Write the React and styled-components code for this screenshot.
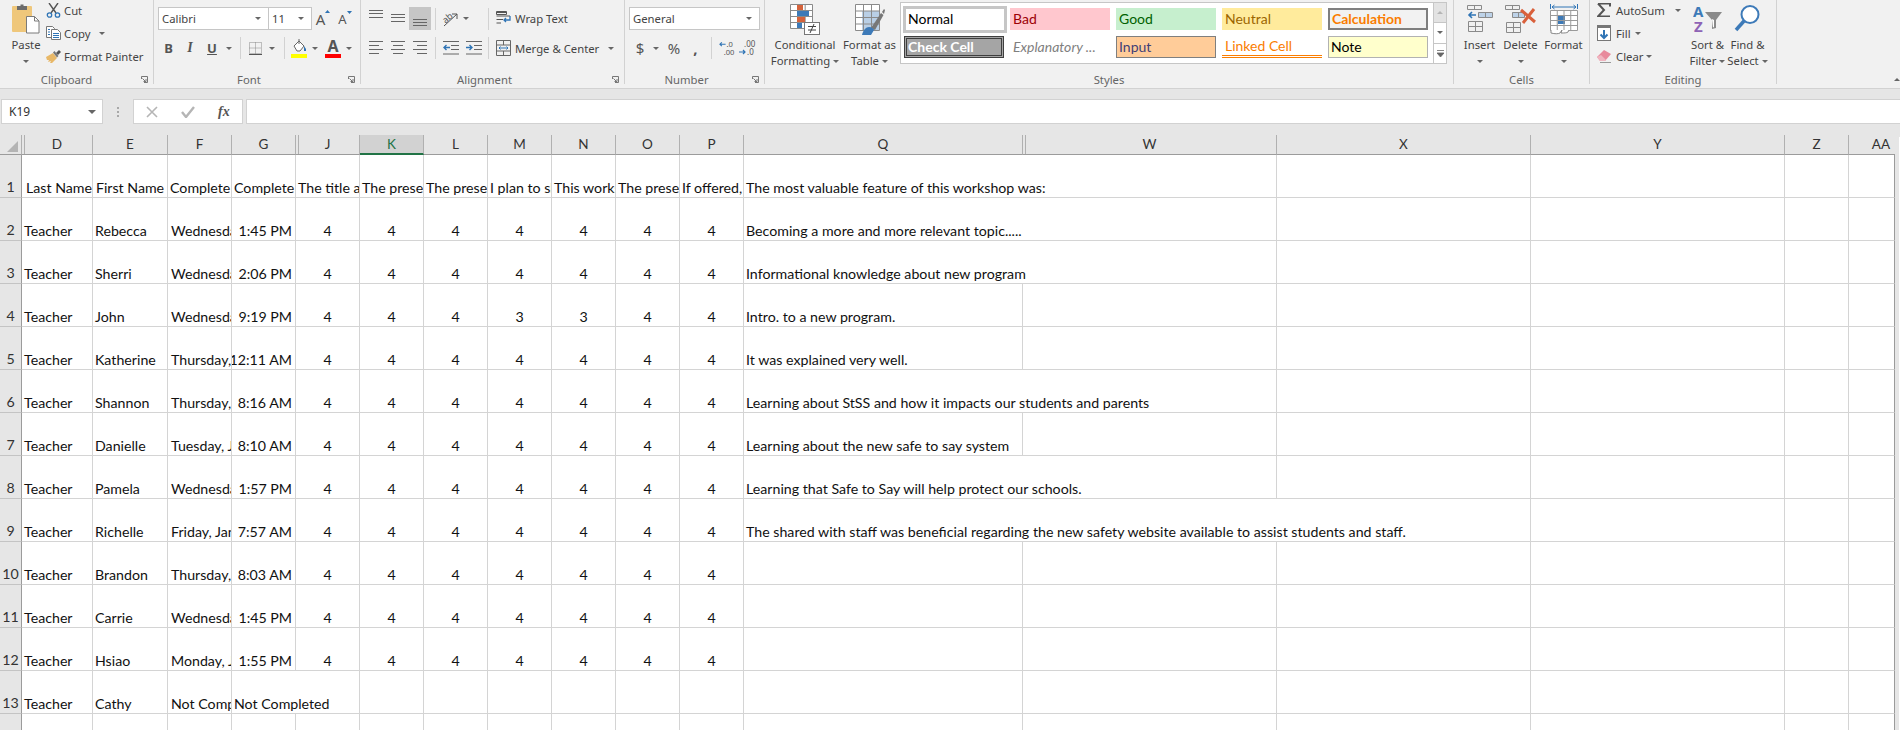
import styled, { createGlobalStyle } from 'styled-components';

const UI_FONT = '"Noto Sans", "Open Sans", sans-serif';
const CELL_FONT = 'Lato, "Liberation Sans", sans-serif';

const GlobalStyle = createGlobalStyle`
  html, body {
    margin: 0;
    height: 730px;
    overflow: hidden;
    background: #e6e6e6;
  }
  * { box-sizing: border-box; }
`;

const Ribbon = styled.div`
  display: flex;
  height: 89px;
  padding-bottom: 5px;
  background: #f1f1f1;
  border-bottom: 1px solid #d2d2d2;
  font-family: ${UI_FONT};
  font-size: 11.3px;
  color: #444;
`;

const Group = styled.div`
  position: relative;
  display: flex;
  flex-direction: column;
  flex: none;
  width: ${({ $w }) => $w}px;
  height: 84px;
  border-right: 1px solid #d2d2d2;
`;

const GroupBody = styled.div`
  display: flex;
  flex: none;
  height: 73px;
  padding-left: ${({ $pad }) => $pad || 0}px;
`;

const GroupLabel = styled.div`
  flex: none;
  height: 14px;
  margin-top: 0;
  padding-right: ${({ $inset }) => $inset || 0}px;
  line-height: 14px;
  text-align: center;
  color: #666;
  font-size: 11.3px;
`;

const Launcher = styled.svg`
  position: absolute;
  right: 5px;
  bottom: 1px;
  width: 7px;
  height: 7px;
`;

const Caret = styled.i`
  display: inline-block;
  flex: none;
  width: 0;
  height: 0;
  border-left: 3px solid transparent;
  border-right: 3px solid transparent;
  border-top: 3px solid #666;
  margin-left: ${({ $ml }) => $ml || 0}px;
`;

const LargeButton = styled.div`
  display: flex;
  flex-direction: column;
  align-items: center;
  flex: none;
  width: ${({ $w }) => $w}px;
  line-height: 16px;
  white-space: nowrap;
`;

const LargeIcon = styled.div`
  display: flex;
  justify-content: center;
  height: 37px;
  padding-top: ${({ $top }) => ($top === undefined ? 4 : $top)}px;
`;

const CaretLine = styled.div`
  display: flex;
  align-items: center;
  height: 16px;
`;

const SmallStack = styled.div`
  display: flex;
  flex-direction: column;
  gap: 1px;
  flex: none;
  width: ${({ $w }) => $w}px;
  margin-top: -1px;
`;

const SmallRow = styled.div`
  display: flex;
  align-items: center;
  height: 22px;
  white-space: nowrap;
`;

const SmallIcon = styled.div`
  display: flex;
  align-items: center;
  flex: none;
  width: ${({ $w }) => $w}px;
`;

const TwoRows = styled.div`
  display: flex;
  flex-direction: column;
  gap: 7px;
  padding-top: 7px;
`;

const ToolRow = styled.div`
  display: flex;
  align-items: center;
  height: ${({ $h }) => $h}px;
  white-space: nowrap;
`;

const Slot = styled.div`
  display: flex;
  align-items: center;
  justify-content: center;
  flex: none;
  width: ${({ $w }) => $w}px;
  height: ${({ $h }) => ($h ? `${$h}px` : 'auto')};
  background: ${({ $active }) => ($active ? '#c6c6c6' : 'transparent')};
`;

const Divider = styled.div`
  flex: none;
  width: ${({ $w }) => $w || 8}px;
  height: 22px;
  display: flex;
  justify-content: center;

  &::after {
    content: '';
    width: 1px;
    background: #d2d2d2;
  }
`;

const ComboBox = styled.div`
  display: flex;
  align-items: center;
  justify-content: space-between;
  flex: none;
  width: ${({ $w }) => $w}px;
  height: 23px;
  margin-left: ${({ $ml }) => $ml || 0}px;
  padding: 0 7px 0 3px;
  background: #fff;
  border: 1px solid #c6c6c6;
  color: #444;
`;

const Glyph = styled.span`
  font-family: ${({ $serif }) => ($serif ? '"Liberation Serif", serif' : UI_FONT)};
  font-size: ${({ $size }) => $size || 13}px;
  font-weight: ${({ $bold }) => ($bold ? 700 : 400)};
  font-style: ${({ $italic }) => ($italic ? 'italic' : 'normal')};
  text-decoration: ${({ $under }) => ($under ? 'underline' : 'none')};
  color: #555;
`;

const Gallery = styled.div`
  display: flex;
  flex: none;
  width: 547px;
  height: 62px;
  margin: 2px 0 0 1px;
  background: #fff;
  border: 1px solid #c6c6c6;
`;

const StyleGrid = styled.div`
  display: grid;
  flex: none;
  grid-template-columns: repeat(5, 100px);
  grid-auto-rows: 22px;
  gap: 6px;
  width: 532px;
  padding: 5px 0 0 3px;
  font-family: ${CELL_FONT};
  font-size: 14px;
`;

const StyleCell = styled.div`
  display: flex;
  align-items: center;
  padding-left: 3px;
  padding-bottom: 1px;
  white-space: nowrap;
  overflow: hidden;
  ${({ $kind }) => STYLE_KINDS[$kind]}
`;

const STYLE_KINDS = {
  normal: 'background:#fff;color:#000;margin:-2px -3px -3px -1px;padding:0 0 3px 2px;border:3px solid #c6c6c6;',
  bad: 'background:#ffc7ce;color:#9c0006;',
  good: 'background:#c6efce;color:#006100;',
  neutral: 'background:#ffeb9c;color:#9c6500;',
  calculation: 'background:#f2f2f2;color:#fa7d00;font-weight:700;border:2px solid #7f7f7f;padding:0 0 2px 2px;',
  check: 'background:#a5a5a5;color:#fff;font-weight:700;border:3px double #3f3f3f;padding-left:1px;',
  explanatory: 'color:#7f7f7f;font-style:italic;',
  input: 'background:#ffcc99;color:#3f3f76;border:1px solid #7f7f7f;padding-left:2px;',
  linked: 'color:#fa7d00;border-bottom:3px double #fa7d00;',
  note: 'background:#ffffcc;color:#000;border:1px solid #b2b2b2;padding-left:2px;',
};

const GalleryScroll = styled.div`
  display: flex;
  flex-direction: column;
  flex: none;
  width: 13px;
`;

const ScrollButton = styled.div`
  display: flex;
  align-items: center;
  justify-content: center;
  flex: 1;
  background: ${({ $off }) => ($off ? '#e3e3e3' : '#fff')};
  border-left: 1px solid #c6c6c6;
  border-bottom: ${({ $last }) => ($last ? 'none' : '1px solid #c6c6c6')};
`;

const Collapse = styled.div`
  display: flex;
  flex: 1;
  align-items: flex-end;
  justify-content: flex-end;
  padding-bottom: 2px;
`;

const FormulaStrip = styled.div`
  display: flex;
  height: 46px;
  padding: 10px 0 11px 1px;
  background: #e6e6e6;
  font-family: ${UI_FONT};
`;

const NameBox = styled.div`
  display: flex;
  align-items: center;
  justify-content: space-between;
  flex: none;
  width: 102px;
  padding: 0 6px 0 7px;
  background: #fff;
  border: 1px solid #d2d2d2;
  font-size: 12px;
  color: #333;
`;

const Grip = styled.div`
  display: flex;
  flex-direction: column;
  align-items: center;
  justify-content: center;
  gap: 2px;
  flex: none;
  width: 30px;

  i {
    width: 2px;
    height: 2px;
    background: #a8a8a8;
  }
`;

const FxBox = styled.div`
  display: flex;
  align-items: center;
  flex: none;
  width: 110px;
  padding-left: 12px;
  gap: 23px;
  background: #fff;
  border: 1px solid #d2d2d2;
`;

const FormulaInput = styled.div`
  flex: 1;
  margin-left: 3px;
  background: #fff;
  border: 1px solid #d2d2d2;
  border-right: none;
`;

const SheetWrap = styled.div`
  display: flex;
`;

const SheetArea = styled.div`
  display: grid;
  flex: none;
  grid-template-columns: 22px 71px 75px repeat(9, 64px) 279px 254px 254px 254px 64px 46px;
  grid-template-rows: 20px repeat(14, 43px);
  font-family: ${CELL_FONT};
  font-size: 14.2px;
  color: #111;
  background: #fff;
`;

const ScrollEdge = styled.div`
  flex: none;
  width: 1px;
  height: 593px;
  margin: 2px 0 0 4px;
  background: #fff;
`;

const HeadCell = styled.div`
  display: flex;
  align-items: center;
  justify-content: center;
  padding: 0 0 1px ${({ $pl }) => $pl || 0}px;
  font-size: 13.5px;
  overflow: hidden;
  background-color: ${({ $sel }) => ($sel ? '#d2d2d2' : '#e6e6e6')};
  background-image: ${({ $double }) =>
    $double ? 'linear-gradient(#b0b0b0, #b0b0b0)' : 'none'};
  background-size: 1px 100%;
  background-position: 2px 0;
  background-repeat: no-repeat;
  color: ${({ $sel }) => ($sel ? '#217346' : '#333')};
  border-right: ${({ $clip }) => ($clip ? 'none' : '1px solid #b0b0b0')};
  border-bottom: ${({ $sel }) => ($sel ? '2px solid #217346' : '1px solid #9b9b9b')};
`;

const Corner = styled(HeadCell)`
  justify-content: flex-end;
  align-items: flex-end;
  padding: 0 3px 2px 0;
`;

const RowHead = styled.div`
  display: flex;
  align-items: flex-end;
  justify-content: center;
  padding-bottom: 2px;
  background: #e6e6e6;
  color: #333;
  border-right: 1px solid #9b9b9b;
  border-bottom: 1px solid #c4c4c4;
`;

const Cell = styled.div`
  display: flex;
  align-items: flex-end;
  justify-content: ${({ $align }) => $align || 'flex-start'};
  padding: 0 ${({ $pr }) => ($pr === undefined ? 2 : $pr)}px 1px ${({ $pl }) => ($pl === undefined ? 2 : $pl)}px;
  white-space: nowrap;
  overflow: ${({ $spill }) => ($spill ? 'visible' : 'hidden')};
  border-bottom: 1px solid #d4d4d4;
  border-right: ${({ $open, $edge }) =>
    $open ? 'none' : $edge ? '1px solid #9b9b9b' : '1px solid #d4d4d4'};
`;

const Line = ({ d, c = '#666', w = 1 }) => <path d={d} stroke={c} strokeWidth={w} fill="none" />;

const PasteIcon = () => (
  <svg width="30" height="31" viewBox="0 0 30 31">
    <rect x="1" y="3" width="20" height="26" rx="1" fill="#efc77b" />
    <path d="M6 7V3h3.5V1.5h3V3H16v4z" fill="#6b6b6b" />
    <path d="M15.5 15.5h8l4.5 4.5v12h-12.5z" fill="#fff" stroke="#7a7a7a" transform="translate(0 -2)" />
    <path d="M23.5 13.5V18h4.5" fill="none" stroke="#7a7a7a" />
  </svg>
);

const CutIcon = () => (
  <svg width="15" height="15" viewBox="0 0 15 15">
    <Line d="M3 0l7 10M12 0L5 10" c="#555" w={1.4} />
    <circle cx="3.5" cy="12" r="2.2" fill="none" stroke="#2f74b5" strokeWidth="1.3" />
    <circle cx="11.5" cy="12" r="2.2" fill="none" stroke="#2f74b5" strokeWidth="1.3" />
  </svg>
);

const CopyIcon = () => (
  <svg width="15" height="14" viewBox="0 0 15 14">
    <path d="M.5.5h6l2 2v9h-8z" fill="#fff" stroke="#777" />
    <path d="M5.5 3.5h6l3 3v7h-9z" fill="#fff" stroke="#777" />
    <Line d="M2 3.5h2M2 6h2M2 8.5h2M7 7.5h6M7 9.5h6M7 11.5h6" c="#2f74b5" />
  </svg>
);

const PainterIcon = () => (
  <svg width="16" height="14" viewBox="0 0 16 14">
    <path d="M0 8l7-4 4 5-5 5H4l1-2-3 1 1-2-2 0z" fill="#e8b868" />
    <path d="M7 3.5l4 5 1.5-1.5-4-5z" fill="#777" />
    <path d="M10 4l3-3 2 2-3 3z" fill="#555" />
  </svg>
);

const GrowIcon = ({ down }) => (
  <Slot $w={22}>
    <Glyph $size={down ? 13 : 15}>A</Glyph>
    <svg width="5" height="12" viewBox="0 0 5 12" style={{ alignSelf: 'flex-start' }}>
      <path d={down ? 'M0 1h5L2.5 4z' : 'M0 4h5L2.5 1z'} fill="#2f74b5" />
    </svg>
  </Slot>
);

const BorderIcon = () => (
  <svg width="13" height="13" viewBox="0 0 13 13">
    <path d="M.5.5h12v11H.5zM6.5.5v11M.5 6h12" fill="none" stroke="#888" strokeDasharray="1 1" />
    <path d="M0 12.5h13" stroke="#555" />
  </svg>
);

const FillIcon = () => (
  <svg width="16" height="20" viewBox="0 0 16 20">
    <path d="M3 8l5-5 5 5-4 5H6z" fill="#fff" stroke="#666" />
    <path d="M8 1v5" stroke="#666" />
    <path d="M13 8l2 3v2h-2z" fill="#2f74b5" />
    <rect y="16" width="16" height="4" fill="#ffff00" />
  </svg>
);

const FontColorIcon = () => (
  <svg width="16" height="20" viewBox="0 0 16 20">
    <text x="8" y="14" textAnchor="middle" fontFamily="Noto Sans" fontWeight="700" fontSize="16" fill="#555">A</text>
    <rect y="16" width="16" height="4" fill="#ff0000" />
  </svg>
);

const LinesIcon = ({ ys, x1 = 0, x2 = 14, h = 23 }) => (
  <svg width="14" height={h} viewBox={`0 0 14 ${h}`}>
    {ys.map((y, i) => (
      <Line key={i} d={`M${Array.isArray(x1) ? x1[i] : x1} ${y + 0.5}H${Array.isArray(x2) ? x2[i] : x2}`} />
    ))}
  </svg>
);

const OrientIcon = () => (
  <svg width="18" height="16" viewBox="0 0 18 16">
    <text x="1" y="10" fontFamily="Noto Sans" fontSize="9" fill="#555" transform="rotate(-40 6 8)">ab</text>
    <Line d="M2 15L15 3M10 3h5v5" c="#555" />
  </svg>
);

const IndentIcon = ({ out }) => (
  <svg width="16" height="14" viewBox="0 0 16 14">
    <Line d="M0 .5h16M8 4.5h8M8 8.5h8M0 13h16" />
    <Line d={out ? 'M7 6.5H1M3.5 4l-2.5 2.5L3.5 9' : 'M0 6.5h6M3.5 4L6 6.5 3.5 9'} c="#2f74b5" w={1.4} />
  </svg>
);

const WrapIcon = () => (
  <svg width="15" height="16" viewBox="0 0 15 16">
    <Line d="M.5 1.5H11M.5 5H14M.5 8.5H7M.5 12H5" c="#555" />
    <path d="M.5.5h10v3H.5z" fill="none" stroke="#555" />
    <Line d="M14 5v4H8M10 7L8 9l2 2" c="#2f74b5" w={1.3} />
  </svg>
);

const MergeIcon = () => (
  <svg width="15" height="16" viewBox="0 0 15 16">
    <path d="M.5.5h14v15H.5zM.5 5h14M.5 11h14M7.5.5V5M7.5 11v4.5" fill="none" stroke="#666" />
    <Line d="M3 8h9M4.5 6.5L3 8l1.5 1.5M10.5 6.5L12 8l-1.5 1.5" c="#2f74b5" />
  </svg>
);

const DecimalIcon = ({ more }) => (
  <svg width="18" height="16" viewBox="0 0 18 16">
    <text x={more ? 8 : 5} y="7" fontFamily="Noto Sans" fontSize="8" fill="#555">{more ? '.0' : '.00'}</text>
    <text x={more ? 5 : 8} y="15" fontFamily="Noto Sans" fontSize="8" fill="#555">{more ? '.00' : '.0'}</text>
    <Line d={more ? 'M7 4H1M3 2L1 4l2 2' : 'M0 12h6M4 10l2 2-2 2'} c="#2f74b5" w={1.2} />
  </svg>
);

const GridLines = ({ x, y, w, h, cols, rows, c = '#8a8a8a' }) => {
  const parts = [`M${x + 0.5} ${y + 0.5}h${w}v${h}h${-w}z`];
  for (let i = 1; i < cols; i++) parts.push(`M${x + 0.5 + (w * i) / cols} ${y + 0.5}v${h}`);
  for (let i = 1; i < rows; i++) parts.push(`M${x + 0.5} ${y + 0.5 + (h * i) / rows}h${w}`);
  return <path d={parts.join('')} fill="none" stroke={c} />;
};

const ConditionalIcon = () => (
  <svg width="30" height="31" viewBox="0 0 30 31">
    <rect x="0.5" y="0.5" width="22" height="24" fill="#fff" />
    <GridLines x={0} y={0} w={22} h={24} cols={3} rows={4} />
    <rect x="7" y="1" width="6" height="5" fill="#d5633c" />
    <rect x="7" y="7" width="12" height="5" fill="#3d7ab8" />
    <rect x="7" y="13" width="8" height="5" fill="#d5633c" />
    <rect x="7" y="19" width="5" height="5" fill="#3d7ab8" />
    <rect x="14.5" y="18.5" width="15" height="12" fill="#fff" stroke="#777" />
    <Line d="M18 22.5h8M18 26h8M20 29l4-9" c="#444" />
  </svg>
);

const TableIcon = () => (
  <svg width="30" height="31" viewBox="0 0 30 31">
    <rect x="0.5" y="0.5" width="24" height="26" fill="#fff" />
    <rect x="7" y="7" width="17" height="19" fill="#b9cfe6" />
    <GridLines x={0} y={0} w={24} h={26} cols={3} rows={4} />
    <path d="M16 24l10-15 2.5 2L20 26z" fill="#777" />
    <path d="M27 8l2-3 1 1-1 4z" fill="#777" />
    <path d="M7 31c1-5 4-8 7-8 3 0 5 2 5 3l-3 5z" fill="#3d7ab8" />
  </svg>
);

const InsertIcon = () => (
  <svg width="26" height="28" viewBox="0 0 26 28">
    <GridLines x={0} y={1} w={14} h={4} cols={2} rows={1} />
    <rect x="11" y="8" width="14" height="5" fill="#bdd2e8" />
    <GridLines x={11} y={8} w={14} h={5} cols={2} rows={1} />
    <Line d="M9 11H2M5 8l-3 3 3 3" c="#2f74b5" w={1.6} />
    <GridLines x={1} y={17} w={14} h={10} cols={2} rows={2} />
  </svg>
);

const DeleteIcon = () => (
  <svg width="31" height="29" viewBox="0 0 31 29">
    <GridLines x={0} y={1} w={14} h={4} cols={2} rows={1} />
    <rect x="7" y="8" width="12" height="5" fill="#bdd2e8" />
    <GridLines x={7} y={8} w={12} h={5} cols={2} rows={1} />
    <GridLines x={1} y={18} w={14} h={10} cols={2} rows={2} />
    <path d="M16 6l14 12M29 5L18 19" stroke="#d9603b" strokeWidth="3" fill="none" />
  </svg>
);

const FormatIcon = () => (
  <svg width="28" height="31" viewBox="0 0 28 31">
    <Line d="M.5 0v5M27.5 0v5M2 3h24M4.5 1L2 3l2.5 2M23.5 1L26 3l-2.5 2" c="#2f74b5" />
    <rect x="0.5" y="6.5" width="27" height="20" fill="#fff" />
    <rect x="8" y="11" width="7" height="9" fill="#3d7ab8" />
    <GridLines x={0} y={6} w={27} h={20} cols={4} rows={4} c="#9a9a9a" />
    <path d="M1 26v3c4 1 7 1 9 0l2-3M12 26l-1 3c3 0 6 0 7-1l1-2" fill="#fff" stroke="#888" />
  </svg>
);

const SigmaIcon = () => (
  <svg width="14" height="14" viewBox="0 0 14 14">
    <path d="M1 .5h12v3M13 13.5H1L7 7 1 .5" fill="none" stroke="#555" strokeWidth="2" />
  </svg>
);

const FillDownIcon = () => (
  <svg width="14" height="16" viewBox="0 0 14 16">
    <rect x="0.5" y="0.5" width="13" height="15" fill="#fff" stroke="#777" />
    <rect width="14" height="3" fill="#777" />
    <Line d="M7 5v8M3.5 9.5L7 13l3.5-3.5" c="#2f74b5" w={2} />
  </svg>
);

const ClearIcon = () => (
  <svg width="15" height="14" viewBox="0 0 15 14">
    <path d="M0 8l7-7 7 4-6 7H3z" fill="#e88a9c" />
    <path d="M0 8l3 4h5l1-1-5-5z" fill="#f0b5c0" />
    <Line d="M3 13.5h11" c="#999" />
  </svg>
);

const SortIcon = () => (
  <svg width="30" height="29" viewBox="0 0 30 29">
    <text x="0" y="13" fontFamily="Noto Sans" fontWeight="700" fontSize="15" fill="#3d7ab8">A</text>
    <text x="1" y="28" fontFamily="Noto Sans" fontWeight="700" fontSize="15" fill="#8e63b5">Z</text>
    <path d="M12 8h17l-6 8v8l-4 1v-9z" fill="#8a8a8a" />
    <path d="M19 15l2 1v7l-1 .5z" fill="#fff" />
  </svg>
);

const FindIcon = () => (
  <svg width="27" height="29" viewBox="0 0 27 29">
    <circle cx="16" cy="10.5" r="8.5" fill="#fff" stroke="#3d7ab8" strokeWidth="2" />
    <path d="M10 17L2 26" stroke="#3d7ab8" strokeWidth="3.5" />
  </svg>
);

const Dialog = () => (
  <Launcher viewBox="0 0 7 7">
    <path d="M.5 3V.5H6.5V6.5H3" fill="none" stroke="#777" />
    <path d="M1.5 2.5L4.5 5.5M5 3v2.5H2.5" fill="none" stroke="#777" />
  </Launcher>
);

const CloseIcon = () => (
  <svg width="12" height="12" viewBox="0 0 12 12">
    <Line d="M1 1l10 10M11 1L1 11" c="#b5b5b5" w={1.6} />
  </svg>
);

const CheckIcon = () => (
  <svg width="14" height="12" viewBox="0 0 14 12">
    <path d="M1 6l4 5 8-10" fill="none" stroke="#b5b5b5" strokeWidth="2.4" />
  </svg>
);

const TOP_CARET = <Caret />;

const Clipboard = () => (
  <Group $w={154}>
    <GroupBody $pad={6}>
      <LargeButton $w={40}>
        <LargeIcon $top={3}><PasteIcon /></LargeIcon>
        <div>Paste</div>
        <CaretLine>{TOP_CARET}</CaretLine>
      </LargeButton>
      <SmallStack $w={100}>
        <SmallRow><SmallIcon $w={18}><CutIcon /></SmallIcon>Cut</SmallRow>
        <SmallRow><SmallIcon $w={18}><CopyIcon /></SmallIcon>Copy<Caret $ml={9} /></SmallRow>
        <SmallRow><SmallIcon $w={18}><PainterIcon /></SmallIcon>Format Painter</SmallRow>
      </SmallStack>
    </GroupBody>
    <GroupLabel $inset={20}>Clipboard</GroupLabel>
    <Dialog />
  </Group>
);

const FontGroup = () => (
  <Group $w={207}>
    <GroupBody $pad={4}>
      <TwoRows>
        <ToolRow $h={23}>
          <ComboBox $w={111}>Calibri<Caret /></ComboBox>
          <ComboBox $w={44} $ml={-1}>11<Caret /></ComboBox>
          <GrowIcon />
          <GrowIcon down />
        </ToolRow>
        <ToolRow $h={22}>
          <Slot $w={21}><Glyph $bold>B</Glyph></Slot>
          <Slot $w={22}><Glyph $serif $italic $bold $size={14}>I</Glyph></Slot>
          <Slot $w={22}><Glyph $bold $under>U</Glyph></Slot>
          <Slot $w={12}><Caret /></Slot>
          <Divider $w={10} />
          <Slot $w={20}><BorderIcon /></Slot>
          <Slot $w={14}><Caret /></Slot>
          <Divider $w={10} />
          <Slot $w={20}><FillIcon /></Slot>
          <Slot $w={12}><Caret /></Slot>
          <Slot $w={24}><FontColorIcon /></Slot>
          <Slot $w={8}><Caret /></Slot>
        </ToolRow>
      </TwoRows>
    </GroupBody>
    <GroupLabel $inset={16}>Font</GroupLabel>
    <Dialog />
  </Group>
);

const Alignment = () => (
  <Group $w={264}>
    <GroupBody $pad={4}>
      <TwoRows>
        <ToolRow $h={23}>
          <Slot $w={22}><LinesIcon ys={[3, 6, 10]} /></Slot>
          <Slot $w={22}><LinesIcon ys={[7, 10, 14]} /></Slot>
          <Slot $w={22} $h={23} $active><LinesIcon ys={[12, 15, 18]} /></Slot>
          <Divider />
          <Slot $w={24}><OrientIcon /></Slot>
          <Slot $w={6}><Caret /></Slot>
          <Slot $w={15} />
          <Divider />
          <Slot $w={4} />
          <SmallIcon $w={19}><WrapIcon /></SmallIcon>
          Wrap Text
        </ToolRow>
        <ToolRow $h={22}>
          <Slot $w={22}><LinesIcon h={14} ys={[0, 4, 8, 12]} x2={[14, 10, 14, 10]} /></Slot>
          <Slot $w={22}><LinesIcon h={14} ys={[0, 4, 8, 12]} x1={[0, 2, 0, 2]} x2={[14, 12, 14, 12]} /></Slot>
          <Slot $w={22}><LinesIcon h={14} ys={[0, 4, 8, 12]} x1={[0, 4, 0, 4]} /></Slot>
          <Divider />
          <Slot $w={24}><IndentIcon out /></Slot>
          <Slot $w={21}><IndentIcon /></Slot>
          <Divider />
          <Slot $w={4} />
          <SmallIcon $w={19}><MergeIcon /></SmallIcon>
          Merge &amp; Center
          <Caret $ml={9} />
        </ToolRow>
      </TwoRows>
    </GroupBody>
    <GroupLabel $inset={16}>Alignment</GroupLabel>
    <Dialog />
  </Group>
);

const NumberGroup = () => (
  <Group $w={140}>
    <GroupBody $pad={4}>
      <TwoRows>
        <ToolRow $h={23}><ComboBox $w={131}>General<Caret /></ComboBox></ToolRow>
        <ToolRow $h={22}>
          <Slot $w={22}><Glyph $size={15}>$</Glyph></Slot>
          <Slot $w={10}><Caret /></Slot>
          <Slot $w={26}><Glyph $size={15}>%</Glyph></Slot>
          <Slot $w={17}><Glyph $size={15} $bold>,</Glyph></Slot>
          <Divider $w={15} />
          <Slot $w={17}><DecimalIcon more /></Slot>
          <Slot $w={24}><DecimalIcon /></Slot>
        </ToolRow>
      </TwoRows>
    </GroupBody>
    <GroupLabel $inset={16}>Number</GroupLabel>
    <Dialog />
  </Group>
);

const STYLE_CELLS = [
  ['normal', 'Normal'],
  ['bad', 'Bad'],
  ['good', 'Good'],
  ['neutral', 'Neutral'],
  ['calculation', 'Calculation'],
  ['check', 'Check Cell'],
  ['explanatory', 'Explanatory ...'],
  ['input', 'Input'],
  ['linked', 'Linked Cell'],
  ['note', 'Note'],
];

const Styles = () => (
  <Group $w={689}>
    <GroupBody $pad={5}>
      <LargeButton $w={70}>
        <LargeIcon><ConditionalIcon /></LargeIcon>
        <div>Conditional</div>
        <CaretLine>Formatting<Caret $ml={3} /></CaretLine>
      </LargeButton>
      <LargeButton $w={59}>
        <LargeIcon><TableIcon /></LargeIcon>
        <div>Format as</div>
        <CaretLine>Table<Caret $ml={3} /></CaretLine>
      </LargeButton>
      <Gallery>
        <StyleGrid>
          {STYLE_CELLS.map(([kind, label]) => (
            <StyleCell key={kind} $kind={kind}>{label}</StyleCell>
          ))}
        </StyleGrid>
        <GalleryScroll>
          <ScrollButton $off><Caret style={{ transform: 'rotate(180deg)', borderTopColor: '#b5b5b5' }} /></ScrollButton>
          <ScrollButton><Caret /></ScrollButton>
          <ScrollButton $last>
            <svg width="7" height="7" viewBox="0 0 7 7"><path d="M0 .5h7M0 3h7L3.5 7z" stroke="#666" strokeWidth=".8" fill="#666" /></svg>
          </ScrollButton>
        </GalleryScroll>
      </Gallery>
    </GroupBody>
    <GroupLabel>Styles</GroupLabel>
  </Group>
);

const Cells = () => (
  <Group $w={136}>
    <GroupBody $pad={5}>
      <LargeButton $w={41}>
        <LargeIcon><InsertIcon /></LargeIcon>
        <div>Insert</div>
        <CaretLine>{TOP_CARET}</CaretLine>
      </LargeButton>
      <LargeButton $w={41}>
        <LargeIcon><DeleteIcon /></LargeIcon>
        <div>Delete</div>
        <CaretLine>{TOP_CARET}</CaretLine>
      </LargeButton>
      <LargeButton $w={45}>
        <LargeIcon><FormatIcon /></LargeIcon>
        <div>Format</div>
        <CaretLine>{TOP_CARET}</CaretLine>
      </LargeButton>
    </GroupBody>
    <GroupLabel>Cells</GroupLabel>
  </Group>
);

const Editing = () => (
  <Group $w={187}>
    <GroupBody $pad={7}>
      <SmallStack $w={92}>
        <SmallRow><SmallIcon $w={19}><SigmaIcon /></SmallIcon>AutoSum<Caret $ml={10} /></SmallRow>
        <SmallRow><SmallIcon $w={19}><FillDownIcon /></SmallIcon>Fill<Caret $ml={4} /></SmallRow>
        <SmallRow><SmallIcon $w={19}><ClearIcon /></SmallIcon>Clear<Caret $ml={3} /></SmallRow>
      </SmallStack>
      <LargeButton $w={37}>
        <LargeIcon><SortIcon /></LargeIcon>
        <div>Sort &amp;</div>
        <CaretLine>Filter<Caret $ml={3} /></CaretLine>
      </LargeButton>
      <LargeButton $w={43}>
        <LargeIcon><FindIcon /></LargeIcon>
        <div>Find &amp;</div>
        <CaretLine>Select<Caret $ml={3} /></CaretLine>
      </LargeButton>
    </GroupBody>
    <GroupLabel>Editing</GroupLabel>
  </Group>
);

const COLUMNS = ['D', 'E', 'F', 'G', 'J', 'K', 'L', 'M', 'N', 'O', 'P', 'Q', 'W', 'X', 'Y', 'Z', 'AA'];
const DOUBLE = ['D', 'J', 'W'];

const HEADINGS = ['The title a', 'The prese', 'The prese', 'I plan to sl', 'This works', 'The prese', 'If offered,'];

const ANSWERS = [
  ['Rebecca', 'Wednesday,', '1:45 PM', '4444444', 'Becoming a more and more relevant topic.....', [12]],
  ['Sherri', 'Wednesday,', '2:06 PM', '4444444', 'Informational knowledge about new program', [12]],
  ['John', 'Wednesday,', '9:19 PM', '4443344', 'Intro. to a new program.', []],
  ['Katherine', 'Thursday,', '12:11 AM', '4444444', 'It was explained very well.', []],
  ['Shannon', 'Thursday,', '8:16 AM', '4444444', 'Learning about StSS and how it impacts our students and parents', [12]],
  ['Danielle', 'Tuesday, J', '8:10 AM', '4444444', 'Learning about the new safe to say system', []],
  ['Pamela', 'Wednesday,', '1:57 PM', '4444444', 'Learning that Safe to Say will help protect our schools.', [12]],
  ['Richelle', 'Friday, Jan', '7:57 AM', '4444444', 'The shared with staff was beneficial regarding the new safety website available to assist students and staff.', [12, 13]],
  ['Brandon', 'Thursday,', '8:03 AM', '4444444', '', []],
  ['Carrie', 'Wednesday,', '1:45 PM', '4444444', '', []],
  ['Hsiao', 'Monday, J', '1:55 PM', '4444444', '', []],
];

const EmptyCells = ({ row, from, open = [] }) =>
  COLUMNS.slice(from).map((c, i) => (
    <Cell key={`${row}${c}`} $open={open.includes(from + i + 1)} $edge={c === 'AA'} />
  ));

const FirstRow = () => (
  <>
    <RowHead>1</RowHead>
    <Cell $align="center" $pl={4} $pr={0}>Last Name</Cell>
    <Cell $align="center" $pl={0} $pr={0}>First Name</Cell>
    <Cell $pl={2} $pr={0}>Complete</Cell>
    <Cell $pl={2} $pr={0}>Complete</Cell>
    {HEADINGS.map((h, i) => <Cell key={i} $pr={0}>{h}</Cell>)}
    <Cell $spill $open>The most valuable feature of this workshop was:</Cell>
    <EmptyCells row={1} from={12} />
  </>
);

const AnswerRow = ({ row, first, date, time, scores, text, open }) => (
  <>
    <RowHead>{row}</RowHead>
    <Cell $pl={2}>Teacher</Cell>
    <Cell>{first}</Cell>
    <Cell $pl={3} $pr={0}>{date}</Cell>
    <Cell $align="flex-end" $pr={3} $pl={0}>{time}</Cell>
    {scores.split('').map((s, i) => <Cell key={i} $align="center">{s}</Cell>)}
    <Cell $spill $open={open.includes(12)}>{text}</Cell>
    {COLUMNS.slice(12).map((c, i) => (
      <Cell key={c} $open={open.includes(13 + i)} $edge={c === 'AA'} />
    ))}
  </>
);

const LastRow = () => (
  <>
    <RowHead>13</RowHead>
    <Cell $pl={2}>Teacher</Cell>
    <Cell>Cathy</Cell>
    <Cell $pl={3} $pr={0}>Not Comp</Cell>
    <Cell $spill $open>Not Completed</Cell>
    <EmptyCells row={13} from={4} />
  </>
);

const App = () => (
  <>
    <GlobalStyle />
    <Ribbon>
      <Clipboard />
      <FontGroup />
      <Alignment />
      <NumberGroup />
      <Styles />
      <Cells />
      <Editing />
      <Collapse><Caret style={{ transform: 'rotate(180deg)' }} /></Collapse>
    </Ribbon>
    <FormulaStrip>
      <NameBox>K19<Caret style={{ borderLeftWidth: 4, borderRightWidth: 4, borderTopWidth: 4 }} /></NameBox>
      <Grip><i /><i /><i /></Grip>
      <FxBox>
        <CloseIcon />
        <CheckIcon />
        <Glyph $serif $italic $size={14} $bold>fx</Glyph>
      </FxBox>
      <FormulaInput />
    </FormulaStrip>
    <SheetWrap>
      <SheetArea>
        <Corner>
          <svg width="11" height="11" viewBox="0 0 11 11"><path d="M11 0v11H0z" fill="#b4b4b4" /></svg>
        </Corner>
        {COLUMNS.map((c) => (
          <HeadCell key={c} $sel={c === 'K'} $double={DOUBLE.includes(c)} $clip={c === 'AA'} $pl={c === 'AA' ? 18 : 0}>{c}</HeadCell>
        ))}
        <FirstRow />
        {ANSWERS.map(([first, date, time, scores, text, open], i) => (
          <AnswerRow key={first} row={i + 2} first={first} date={date} time={time} scores={scores} text={text} open={open} />
        ))}
        <LastRow />
        <RowHead>14</RowHead>
        <EmptyCells row={14} from={0} />
      </SheetArea>
      <ScrollEdge />
    </SheetWrap>
  </>
);

export default App;
